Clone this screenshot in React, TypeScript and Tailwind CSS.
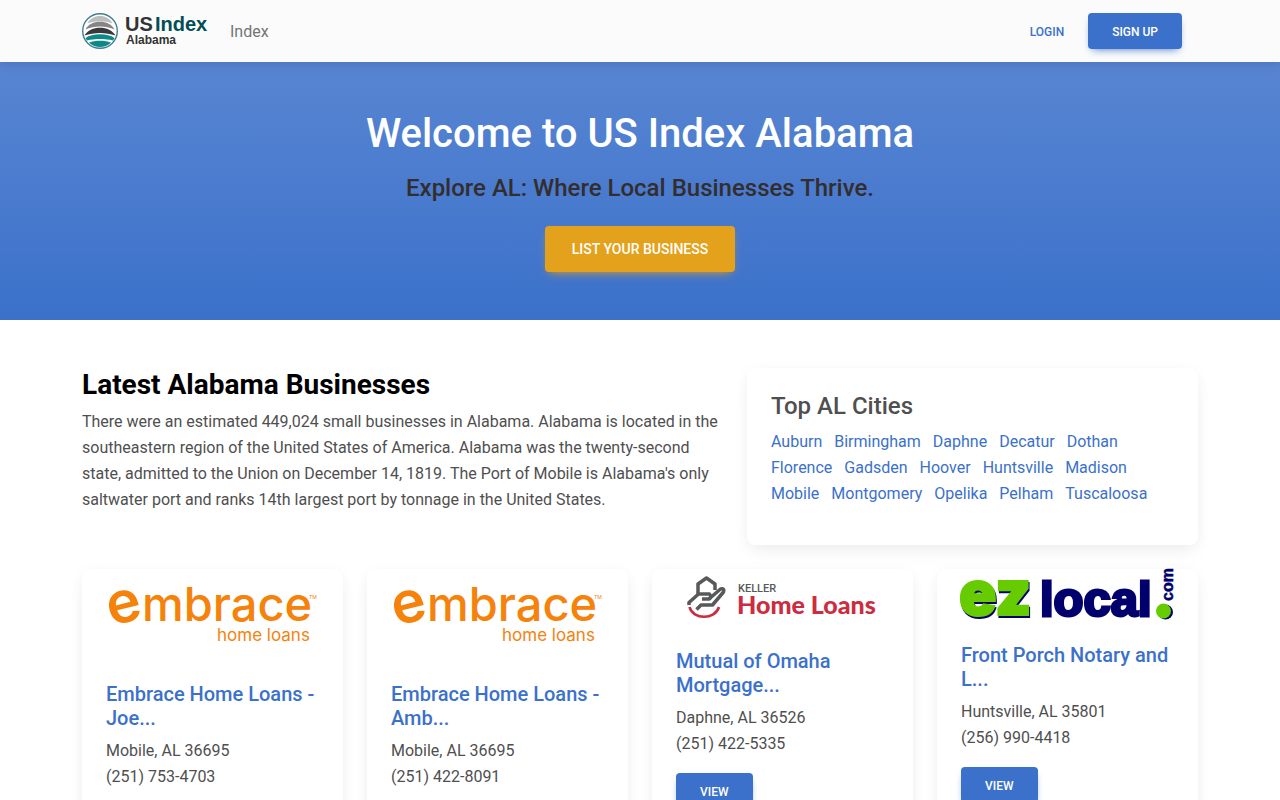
import type { ReactNode } from "react";

type Business = {
  id: number;
  name: string;
  location: string;
  phone: string;
  logo: ReactNode;
};

const cities = [
  "Auburn",
  "Birmingham",
  "Daphne",
  "Decatur",
  "Dothan",
  "Florence",
  "Gadsden",
  "Hoover",
  "Huntsville",
  "Madison",
  "Mobile",
  "Montgomery",
  "Opelika",
  "Pelham",
  "Tuscaloosa",
];

function SiteLogo() {
  return (
    <svg
      viewBox="0 0 128 38"
      className="h-[38px] w-32 overflow-visible"
      role="img"
      aria-label="US Index Alabama"
    >
      <circle cx="18" cy="19" r="17.3" fill="#fff" stroke="#3f7f93" strokeWidth="1.4" />
      <path d="M5.500 11.500C10 1.500 26 1.500 30.500 11.500C23 8.500 13 8.500 5.500 11.500Z" fill="#bdbdbd" />
      <path d="M3.500 17.500C8 7 28 7 32.500 17.500C24 13.500 12 13.500 3.500 17.500Z" fill="#858585" />
      <path d="M2.500 23.500C8 13 28 13 33.500 23.500C24 20 12 20 2.500 23.500Z" fill="#3a3838" />
      <path d="M3.500 26C10 21 26 21 32.500 26L31 28.500C23 26.500 13 26.500 5 28.500Z" fill="#0b8a88" />
      <path d="M7 30.500C13 28 23 28 29 30.500C23 36.500 13 36.500 7 30.500Z" fill="#0b8a88" />
      <g className="font-['Liberation_Sans',sans-serif] font-bold">
        <text x="43" y="19" fontSize="20" fill="#333">
          US
        </text>
        <text x="73" y="19" fontSize="20" fill="#004e56">
          Index
        </text>
        <text x="44" y="32" fontSize="12" fill="#333">
          Alabama
        </text>
      </g>
    </svg>
  );
}

function EmbraceLogo() {
  return (
    <svg
      viewBox="0 0 213 89"
      className="block w-full overflow-visible font-[Inter,sans-serif]"
      fill="#f5820b"
      role="img"
      aria-label="Embrace home loans"
    >
      <text transform="translate(5 57) rotate(-14)" fontSize="58" fontWeight="600">
        e
      </text>
      <text x="36" y="52" fontSize="47" fontWeight="500">
        mbrace
      </text>
      <text x="203" y="30" fontSize="5">
        TM
      </text>
      <text x="111" y="72" fontSize="17">
        home loans
      </text>
    </svg>
  );
}

function KellerLogo() {
  return (
    <svg
      viewBox="0 0 213 56"
      className="block w-full overflow-visible"
      role="img"
      aria-label="Keller Home Loans"
    >
      <g fill="none" stroke="#58595b" strokeWidth="3.500" strokeLinejoin="round">
        <path d="M22 25V15L30.500 9L39 15V21" />
        <path d="M13 36V33.500L22.500 25H33.500Q36 28 33 30H26" />
        <path d="M33 30L44.500 20Q49 19 47.500 23L36.500 36H25L20.500 40.500" />
      </g>
      <path d="M13.500 38C17 51 39 51 43 38" fill="none" stroke="#cc2c40" strokeWidth="2.600" />
      <text
        x="62"
        y="23"
        fontSize="11"
        fill="#58595b"
        className="font-[Roboto,sans-serif] font-medium"
      >
        KELLER
      </text>
      <text
        x="61"
        y="45"
        fontSize="25"
        fill="#cc2c40"
        className="font-[Lato,sans-serif] font-black"
      >
        Home Loans
      </text>
    </svg>
  );
}

function EzLocalLogo() {
  return (
    <svg
      viewBox="0 0 213 50"
      className="block w-full overflow-visible font-['Liberation_Sans',sans-serif] font-bold"
      role="img"
      aria-label="ezlocal.com"
    >
      <g
        className="font-[Inter,sans-serif] font-black"
        fontSize="62"
        strokeWidth="2"
      >
        <text x="-1" y="48" fill="#02006c" stroke="#02006c">
          ez
        </text>
        <text x="-2" y="46" fill="#66cc00" stroke="#66cc00">
          ez
        </text>
      </g>
      <text x="79" y="47" fontSize="49" fill="#02006c" stroke="#02006c" strokeWidth="3">
        local
      </text>
      <circle cx="204.500" cy="43" r="7.500" fill="#02006c" />
      <circle cx="202.500" cy="42" r="7.500" fill="#66cc00" />
      <text
        transform="translate(212 32) rotate(-90)"
        fontSize="16"
        fill="#02006c"
        stroke="#02006c"
        strokeWidth="0.5"
      >
        com
      </text>
    </svg>
  );
}

const businesses: Business[] = [
  {
    id: 1,
    name: "Embrace Home Loans - Joe...",
    location: "Mobile, AL 36695",
    phone: "(251) 753-4703",
    logo: <EmbraceLogo />,
  },
  {
    id: 2,
    name: "Embrace Home Loans - Amb...",
    location: "Mobile, AL 36695",
    phone: "(251) 422-8091",
    logo: <EmbraceLogo />,
  },
  {
    id: 3,
    name: "Mutual of Omaha Mortgage...",
    location: "Daphne, AL 36526",
    phone: "(251) 422-5335",
    logo: <KellerLogo />,
  },
  {
    id: 4,
    name: "Front Porch Notary and L...",
    location: "Huntsville, AL 35801",
    phone: "(256) 990-4418",
    logo: <EzLocalLogo />,
  },
];

function Navbar() {
  return (
    <header className="relative z-10 bg-[#fbfbfb] shadow-[0_4px_12px_rgba(0,0,0,0.07),0_2px_4px_rgba(0,0,0,0.05)]">
      <nav className="mx-auto flex h-[62px] max-w-[1140px] items-center px-3">
        <a href="#home">
          <SiteLogo />
        </a>
        <a href="#index" className="ml-5 pt-0.5 text-base text-[#757575]">
          Index
        </a>
        <div className="mr-4 ml-auto flex items-center">
          <button
            type="button"
            className="h-9 px-6 pt-0.5 text-xs font-medium text-[#3b71ca] uppercase"
          >
            Login
          </button>
          <button
            type="button"
            className="h-9 rounded bg-[#3b71ca] px-6 pt-0.5 text-xs font-medium text-white uppercase shadow-[0_4px_9px_-4px_#3b71ca]"
          >
            Sign up
          </button>
        </div>
      </nav>
    </header>
  );
}

function Hero() {
  return (
    <section className="bg-linear-to-b from-[#5885d2] to-[#3b71ca] px-3 py-12 text-center">
      <h1 className="text-[40px] leading-12 font-medium text-white">
        Welcome to US Index Alabama
      </h1>
      <h2 className="mt-4 text-2xl leading-7 font-medium text-[#332d2d]">
        Explore AL: Where Local Businesses Thrive.
      </h2>
      <a
        href="#list"
        className="mt-6 inline-flex h-[46px] items-center rounded bg-[#e4a11b] px-[27px] align-top text-sm font-medium text-white uppercase shadow-[0_4px_9px_-4px_#e4a11b]"
      >
        List your business
      </a>
    </section>
  );
}

function CitiesCard() {
  return (
    <aside className="rounded-lg bg-white px-6 pt-6 pb-[38px] shadow-[0_2px_15px_-3px_rgba(0,0,0,0.07),0_10px_20px_-2px_rgba(0,0,0,0.04)]">
      <h3 className="text-2xl leading-[29px] font-medium">Top AL Cities</h3>
      <ul className="mt-2 flex flex-wrap gap-x-3 leading-[26px]">
        {cities.map((city) => (
          <li key={city}>
            <a href={`#${city.toLowerCase()}`} className="text-[#3b71ca]">
              {city}
            </a>
          </li>
        ))}
      </ul>
    </aside>
  );
}

function BusinessCard({ business }: { business: Business }) {
  return (
    <article className="rounded-lg bg-white px-6 pb-6 shadow-[0_2px_15px_-3px_rgba(0,0,0,0.07),0_10px_20px_-2px_rgba(0,0,0,0.04)]">
      {business.logo}
      <h5 className="mt-6 text-xl leading-6 font-medium text-[#3b71ca]">
        <a href={`#business-${business.id}`}>{business.name}</a>
      </h5>
      <p className="mt-2 leading-[26px]">
        {business.location}
        <br />
        {business.phone}
      </p>
      <a
        href={`#business-${business.id}`}
        className="mt-4 inline-flex h-9 items-center rounded bg-[#3b71ca] px-6 pt-0.5 text-xs font-medium text-white uppercase shadow-[0_4px_9px_-4px_#3b71ca]"
      >
        View
      </a>
    </article>
  );
}

export default function App() {
  return (
    <div className="min-h-screen bg-white font-[Roboto,sans-serif] text-base text-[#4f4f4f]">
      <Navbar />
      <Hero />
      <main className="mx-auto max-w-[1140px] px-3 py-12">
        <div className="grid gap-6 lg:grid-cols-12">
          <div className="lg:col-span-7">
            <h2 className="text-[28px] leading-[33px] font-bold text-black">
              Latest Alabama Businesses
            </h2>
            <p className="mt-2 leading-[26px]">
              There were an estimated 449,024 small businesses in Alabama.
              Alabama is located in the southeastern region of the United States
              of America. Alabama was the twenty-second state, admitted to the
              Union on December 14, 1819. The Port of Mobile is Alabama's only
              saltwater port and ranks 14th largest port by tonnage in the
              United States.
            </p>
          </div>
          <div className="lg:col-span-5">
            <CitiesCard />
          </div>
        </div>

        <div className="mt-6 grid gap-6 sm:grid-cols-2 lg:grid-cols-4">
          {businesses.map((business) => (
            <BusinessCard key={business.id} business={business} />
          ))}
        </div>
      </main>
    </div>
  );
}
